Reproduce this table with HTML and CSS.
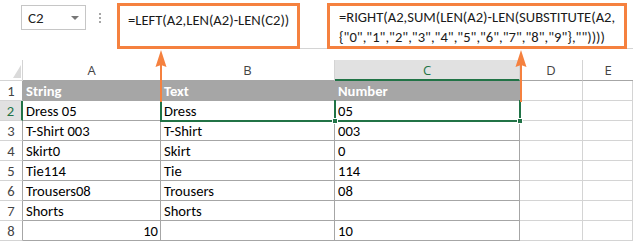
FILE: index.html
```html
<!DOCTYPE html>
<html lang="en">
<head>
<meta charset="utf-8">
<title>Split text and numbers</title>
<link rel="stylesheet" href="styles.css">
</head>
<body>
<div class="sheet">
  <div class="toolbar">
    <div class="namebox">
      <span class="namebox-ref">C2</span>
      <span class="namebox-caret"></span>
    </div>
    <div class="grip"><i></i><i></i><i></i></div>
    <div class="formulabar">
      <div class="callout callout-left">=LEFT(A2,LEN(A2)-LEN(C2))</div>
      <div class="callout callout-right">=RIGHT(A2,SUM(LEN(A2)-LEN(SUBSTITUTE(A2,<br>{"0","1","2","3","4","5","6","7","8","9"},""))))</div>
    </div>
  </div>

  <div class="grid">
    <div class="corner"><span class="corner-mark"></span></div>
    <div class="colhead">A</div>
    <div class="colhead">B</div>
    <div class="colhead colhead-active">C</div>
    <div class="colhead">D</div>
    <div class="colhead colhead-last">E</div>

    <div class="rowhead">1</div>
    <div class="cell tbl head">String</div>
    <div class="cell tbl head">Text</div>
    <div class="cell tbl head">Number</div>
    <div class="cell"></div>
    <div class="cell"></div>

    <div class="rowhead rowhead-active">2</div>
    <div class="cell tbl">Dress 05</div>
    <div class="cell tbl">Dress</div>
    <div class="cell tbl">05</div>
    <div class="cell"></div>
    <div class="cell"></div>

    <div class="rowhead">3</div>
    <div class="cell tbl">T-Shirt 003</div>
    <div class="cell tbl">T-Shirt</div>
    <div class="cell tbl">003</div>
    <div class="cell"></div>
    <div class="cell"></div>

    <div class="rowhead">4</div>
    <div class="cell tbl">Skirt0</div>
    <div class="cell tbl">Skirt</div>
    <div class="cell tbl">0</div>
    <div class="cell"></div>
    <div class="cell"></div>

    <div class="rowhead">5</div>
    <div class="cell tbl">Tie114</div>
    <div class="cell tbl">Tie</div>
    <div class="cell tbl">114</div>
    <div class="cell"></div>
    <div class="cell"></div>

    <div class="rowhead">6</div>
    <div class="cell tbl">Trousers08</div>
    <div class="cell tbl">Trousers</div>
    <div class="cell tbl">08</div>
    <div class="cell"></div>
    <div class="cell"></div>

    <div class="rowhead">7</div>
    <div class="cell tbl">Shorts</div>
    <div class="cell tbl">Shorts</div>
    <div class="cell tbl"></div>
    <div class="cell"></div>
    <div class="cell"></div>

    <div class="rowhead">8</div>
    <div class="cell tbl num">10</div>
    <div class="cell tbl"></div>
    <div class="cell tbl">10</div>
    <div class="cell"></div>
    <div class="cell"></div>

    <!-- selection outlines for B2 and the active cell C2 -->
    <div class="sel sel-b2"></div>
    <div class="sel sel-c2"><span class="handle handle-l"></span><span class="handle handle-r"></span></div>
  </div>

  <!-- pointers from the formulas down to their result columns -->
  <svg class="pointer pointer-left" width="12" height="52" viewBox="0 0 12 52">
    <polygon points="6,0 11.5,17 6,15 0.5,17" fill="#f5813f"/>
    <rect x="5" y="14" width="2" height="38" fill="#f5813f"/>
  </svg>
  <svg class="pointer pointer-right" width="12" height="52" viewBox="0 0 12 52">
    <polygon points="6,0 11.5,17 6,15 0.5,17" fill="#f5813f"/>
    <rect x="5" y="14" width="2" height="38" fill="#f5813f"/>
  </svg>
</div>
</body>
</html>
```

FILE: styles.css
```css
* {
  box-sizing: border-box;
}

html, body {
  margin: 0;
  padding: 0;
  background: #ffffff;
}

.sheet {
  position: relative;
  width: 633px;
  height: 242px;
  overflow: hidden;
  font-family: "Carlito", "Lato", "Liberation Sans", sans-serif;
  color: #000;
}

/* ---------- name box + formula bar ---------- */
.toolbar {
  display: flex;
  align-items: flex-start;
  height: 60px;
}

.namebox {
  margin: 5px 0 0 21px;
  width: 65px;
  height: 25px;
  border: 1px solid #c6c6c6;
  display: flex;
  align-items: center;
  padding-left: 6px;
  font-size: 15px;
  color: #222;
}

.namebox-ref {
  flex: 1;
}

.namebox-caret {
  width: 0;
  height: 0;
  margin-right: 6px;
  border-left: 4px solid transparent;
  border-right: 4px solid transparent;
  border-top: 4px solid #777;
}

.grip {
  display: flex;
  flex-direction: column;
  gap: 2px;
  margin: 13px 0 0 13px;
  width: 2px;
}

.grip i {
  display: block;
  width: 2px;
  height: 2px;
  background: #a6a6a6;
}

.formulabar {
  flex: 1;
  display: flex;
  align-items: flex-start;
  margin-left: 16px;
  height: 49px;
  border-bottom: 1px solid #d4d4d4;
  font-size: 14.6px;
  color: #1a1a1a;
}

.callout {
  margin-top: 3px;
  height: 46px;
  border: 3px solid #f5813f;
  background: #fff;
  white-space: nowrap;
  line-height: 20px;
}

.callout-left {
  width: 183px;
  padding: 4px 0 0 8px;
}

.callout-right {
  width: 300px;
  margin-left: 27px;
  padding: 1px 0 0 9px;
}

/* ---------- worksheet grid ---------- */
.grid {
  position: relative;
  display: grid;
  grid-template-columns: 23px 138px 174px 185px 63px 50px;
  grid-template-rows: 21px repeat(8, 20px);
  font-size: 14.6px;
}

.corner {
  position: relative;
  border-right: 1px solid #d4d4d4;
  border-bottom: 1px solid #d4d4d4;
}

.corner-mark {
  position: absolute;
  right: 1px;
  bottom: 2px;
  width: 0;
  height: 0;
  border-left: 8px solid transparent;
  border-bottom: 13px solid #dadada;
}

.colhead {
  display: flex;
  align-items: center;
  justify-content: center;
  border-right: 1px solid #d4d4d4;
  border-bottom: 1px solid #a6a6a6;
  font-family: "Open Sans", "Liberation Sans", sans-serif;
  font-size: 13px;
  color: #444;
}

.colhead-active {
  background: #e1e1e1;
  color: #217346;
  border-bottom: 2px solid #217346;
}

.colhead-last {
  border-right: none;
}

.rowhead {
  display: flex;
  align-items: center;
  justify-content: center;
  border-right: 1px solid #a6a6a6;
  border-bottom: 1px solid #d4d4d4;
  color: #444;
}

.rowhead-active {
  background: #e1e1e1;
  color: #217346;
  border-right: 2px solid #217346;
}

.cell {
  display: flex;
  align-items: center;
  padding: 0 3px;
  white-space: nowrap;
  border-right: 1px solid #d4d4d4;
  border-bottom: 1px solid #d4d4d4;
}

.cell.tbl {
  border-right-color: #a6a6a6;
  border-bottom-color: #a6a6a6;
}

.cell.head {
  background: #a6a6a6;
  color: #fff;
  font-weight: bold;
}

.cell.num {
  justify-content: flex-end;
  padding-right: 2px;
}

/* ---------- selection ---------- */
.sel {
  position: absolute;
  top: 40px;
  height: 22px;
  border: 2px solid #217346;
  border-top: none;
}

.sel-b2 {
  left: 160px;
  width: 176px;
  border-right: none;
}

.sel-c2 {
  left: 334px;
  width: 187px;
}

.handle {
  position: absolute;
  bottom: -4px;
  width: 6px;
  height: 6px;
  background: #217346;
  border: 1px solid #fff;
}

.handle-l {
  left: -4px;
}

.handle-r {
  right: -4px;
}

/* ---------- callout pointers ---------- */
.pointer {
  position: absolute;
  top: 50px;
}

.pointer-left {
  left: 155px;
}

.pointer-right {
  left: 515px;
}
```
